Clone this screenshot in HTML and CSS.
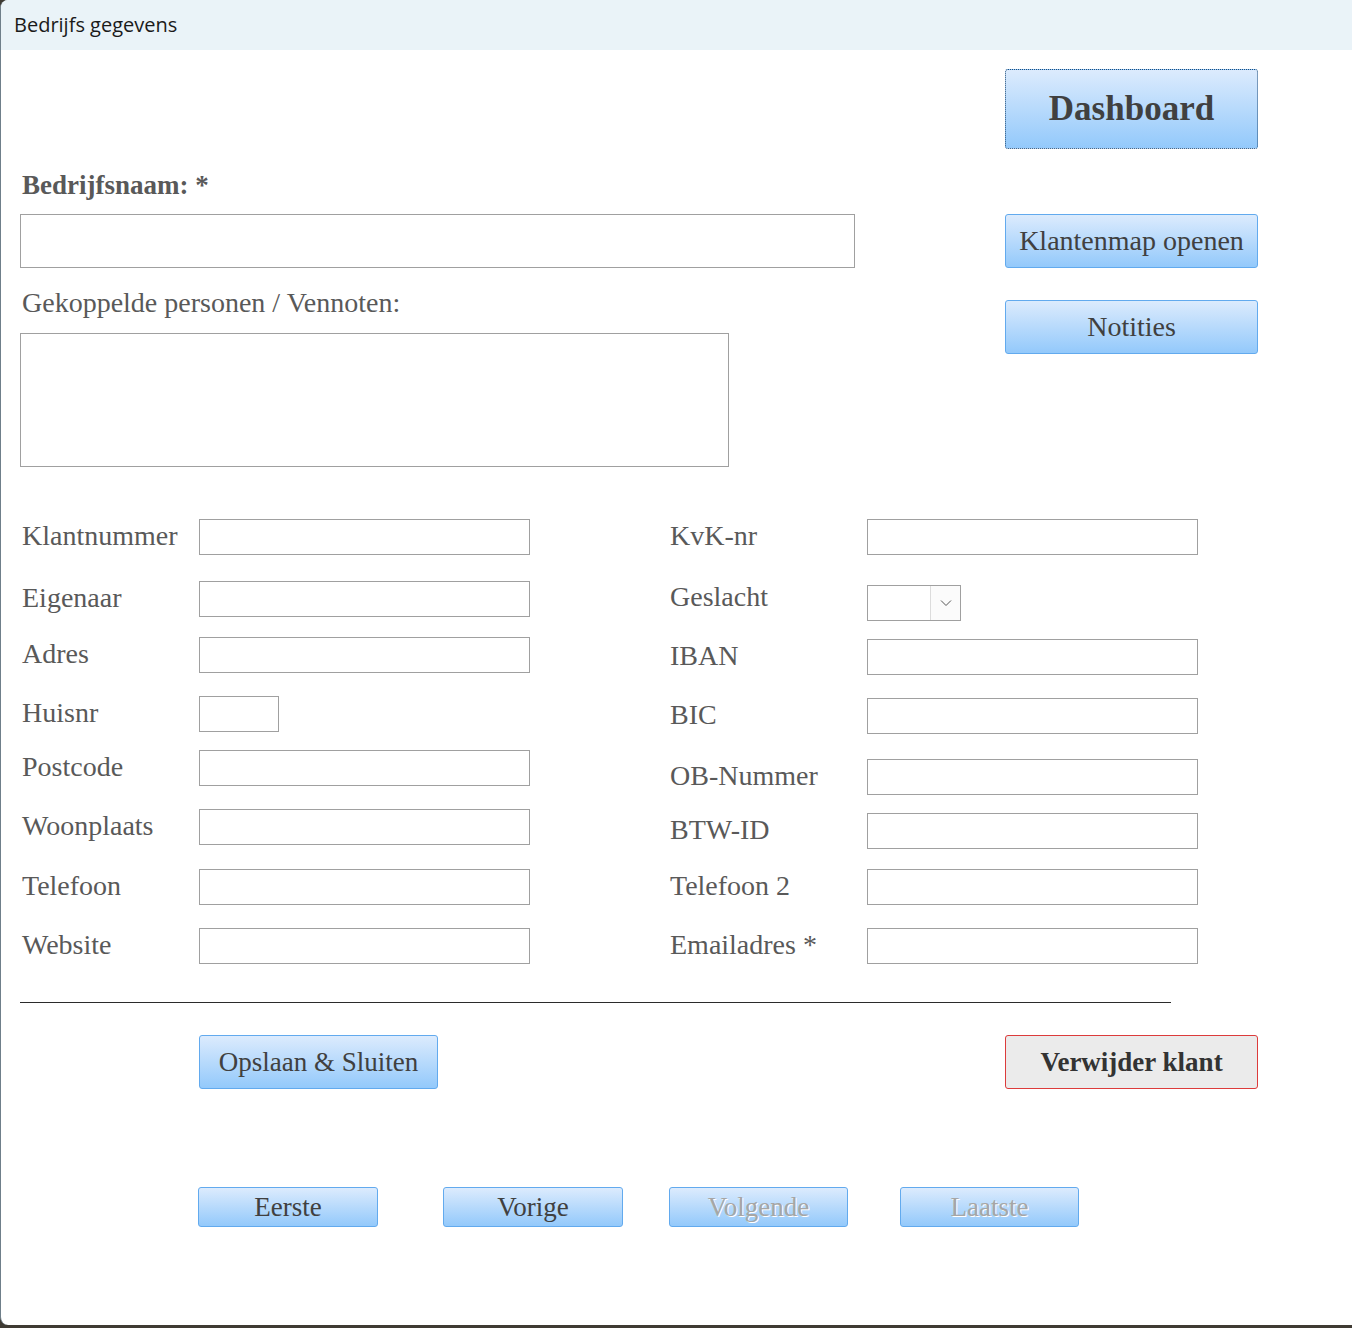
FILE: index.html
```html
<!DOCTYPE html>
<html lang="nl">
<head>
  <meta charset="UTF-8">
  <meta name="viewport" content="width=device-width, initial-scale=1.0">
  <title>Bedrijfs gegevens</title>
  <link rel="stylesheet" href="styles.css">
</head>
<body>

  <div class="window">
    <div class="titlebar">Bedrijfs gegevens</div>

    <div class="form">

      <!-- Top part: company name, persons, side buttons -->
      <div class="top">
        <div class="top-left">
          <label class="label-bold" for="bedrijfsnaam">Bedrijfsnaam: *</label>
          <input type="text" id="bedrijfsnaam" class="input-big">
          <label class="label-top" for="personen">Gekoppelde personen / Vennoten:</label>
          <textarea id="personen" class="memo"></textarea>
        </div>
        <div class="top-right">
          <button class="btn btn-dashboard">Dashboard</button>
          <button class="btn btn-side btn-map">Klantenmap openen</button>
          <button class="btn btn-side btn-notes">Notities</button>
        </div>
      </div>

      <!-- Fields -->
      <div class="fields">
        <div class="col col-left">
          <div class="f-row">
            <label>Klantnummer</label>
            <input type="text">
          </div>
          <div class="f-row mt26">
            <label>Eigenaar</label>
            <input type="text">
          </div>
          <div class="f-row mt20">
            <label>Adres</label>
            <input type="text">
          </div>
          <div class="f-row mt23">
            <label>Huisnr</label>
            <input type="text" class="input-short">
          </div>
          <div class="f-row mt18">
            <label>Postcode</label>
            <input type="text">
          </div>
          <div class="f-row mt23">
            <label>Woonplaats</label>
            <input type="text">
          </div>
          <div class="f-row mt24">
            <label>Telefoon</label>
            <input type="text">
          </div>
          <div class="f-row mt23">
            <label>Website</label>
            <input type="text">
          </div>
        </div>

        <div class="col col-right">
          <div class="f-row">
            <label>KvK-nr</label>
            <input type="text">
          </div>
          <div class="f-row mt30">
            <label class="label-up">Geslacht</label>
            <div class="combo">
              <div class="combo-value"></div>
              <div class="combo-arrow">
                <svg width="12" height="8" viewBox="0 0 12 8"><path d="M1 1.5 L6 6.5 L11 1.5" fill="none" stroke="#555" stroke-width="1"/></svg>
              </div>
            </div>
          </div>
          <div class="f-row mt18">
            <label>IBAN</label>
            <input type="text">
          </div>
          <div class="f-row mt23">
            <label>BIC</label>
            <input type="text">
          </div>
          <div class="f-row mt25">
            <label>OB-Nummer</label>
            <input type="text">
          </div>
          <div class="f-row mt18">
            <label>BTW-ID</label>
            <input type="text">
          </div>
          <div class="f-row mt20">
            <label>Telefoon 2</label>
            <input type="text">
          </div>
          <div class="f-row mt23">
            <label>Emailadres *</label>
            <input type="text">
          </div>
        </div>
      </div>

      <hr class="divider">

      <div class="actions">
        <button class="btn btn-save">Opslaan &amp; Sluiten</button>
        <button class="btn btn-delete">Verwijder klant</button>
      </div>

      <!-- Record navigation -->
      <div class="nav">
        <button class="btn btn-nav nav-first">Eerste</button>
        <button class="btn btn-nav nav-prev">Vorige</button>
        <button class="btn btn-nav nav-next" disabled>Volgende</button>
        <button class="btn btn-nav nav-last" disabled>Laatste</button>
      </div>

    </div>
  </div>

</body>
</html>
```

FILE: styles.css
```css
body {
  margin: 0;
  padding: 0;
  background-color: #3f3b33;
  font-family: "Liberation Serif", "Times New Roman", serif;
}

.window {
  height: 1325px;
  background-color: #fff;
  border-left: 1px solid #6f7f8a;
  border-radius: 8px 0 0 8px;
  overflow: hidden;
}

.titlebar {
  height: 50px;
  line-height: 50px;
  padding-left: 13px;
  background-color: #eaf3f8;
  font-family: "Open Sans", "Noto Sans", sans-serif;
  font-size: 20px;
  color: #1a1a1a;
}

.form {
  padding-left: 19px;
}

/* Top part */
.top {
  display: flex;
  padding-top: 19px;
}

.top-left {
  display: flex;
  flex-direction: column;
  align-items: flex-start;
  padding-top: 100px;
}

.label-bold {
  font-size: 27px;
  font-weight: bold;
  line-height: 32px;
  color: #595959;
  padding-left: 2px;
}

.label-top {
  font-size: 28px;
  line-height: 32px;
  color: #595959;
  padding-left: 2px;
  margin-top: 19px;
}

.input-big {
  box-sizing: border-box;
  width: 835px;
  height: 54px;
  margin-top: 13px;
  border: 1px solid #a0a0a0;
  outline: none;
}

.memo {
  box-sizing: border-box;
  width: 709px;
  height: 134px;
  margin: 14px 0 0 0;
  border: 1px solid #a0a0a0;
  resize: none;
  outline: none;
}

.top-right {
  display: flex;
  flex-direction: column;
  margin-left: auto;
  margin-right: 94px;
}

/* Buttons */
.btn {
  box-sizing: border-box;
  font-family: "Liberation Serif", "Times New Roman", serif;
  color: #404040;
  background: linear-gradient(to bottom, #dcebfd, #93c9fb);
  border: 1px solid #62aaee;
  border-radius: 3px;
  padding: 0;
  cursor: pointer;
}

.btn-dashboard {
  width: 253px;
  height: 80px;
  font-size: 35px;
  font-weight: bold;
  border: 1px dotted #1f4d7a;
}

.btn-side {
  width: 253px;
  height: 54px;
  font-size: 28px;
}

.btn-map {
  margin-top: 65px;
}

.btn-notes {
  margin-top: 32px;
}

/* Fields */
.fields {
  display: flex;
  margin-top: 52px;
}

.col {
  display: flex;
  flex-direction: column;
}

.col-left {
  width: 510px;
}

.col-right {
  margin-left: 138px;
}

.f-row {
  display: flex;
  align-items: center;
  height: 36px;
}

.f-row label {
  box-sizing: border-box;
  width: 179px;
  padding-left: 2px;
  padding-bottom: 2px;
  font-size: 28px;
  color: #595959;
  white-space: nowrap;
}

.col-right .f-row label {
  width: 199px;
}

.label-up {
  position: relative;
  top: -5px;
}

.f-row input {
  box-sizing: border-box;
  width: 331px;
  height: 36px;
  border: 1px solid #a0a0a0;
  outline: none;
}

.f-row .input-short {
  width: 80px;
}

.mt18 { margin-top: 18px; }
.mt20 { margin-top: 20px; }
.mt23 { margin-top: 23px; }
.mt24 { margin-top: 24px; }
.mt25 { margin-top: 25px; }
.mt26 { margin-top: 26px; }
.mt30 { margin-top: 30px; }

.combo {
  box-sizing: border-box;
  display: flex;
  width: 94px;
  height: 36px;
  border: 1px solid #a0a0a0;
}

.combo-value {
  flex: 1;
}

.combo-arrow {
  width: 29px;
  display: flex;
  align-items: center;
  justify-content: center;
  background-color: #fbfbfb;
  border-left: 1px solid #dcdcdc;
}

.divider {
  width: 1151px;
  margin: 38px 0 0 0;
  border: none;
  border-top: 1px solid #2b2b2b;
}

/* Save / delete */
.actions {
  display: flex;
  margin-top: 32px;
  padding-left: 179px;
}

.btn-save {
  width: 239px;
  height: 54px;
  font-size: 27px;
}

.btn-delete {
  width: 253px;
  height: 54px;
  margin-left: auto;
  margin-right: 94px;
  font-size: 27px;
  font-weight: bold;
  color: #333;
  background: #ebebeb;
  border: 1px solid #dc3b3b;
}

/* Navigation */
.nav {
  display: flex;
  margin-top: 98px;
  padding-left: 178px;
}

.btn-nav {
  width: 180px;
  height: 40px;
  font-size: 27px;
}

.nav-first { margin-right: 65px; }
.nav-prev { margin-right: 46px; }
.nav-next { margin-right: 52px; width: 179px; }
.nav-last { width: 179px; }

.btn-nav:disabled {
  color: #a6a6a6;
  text-shadow: 1px 1px 0 #fff;
  cursor: default;
}
```
